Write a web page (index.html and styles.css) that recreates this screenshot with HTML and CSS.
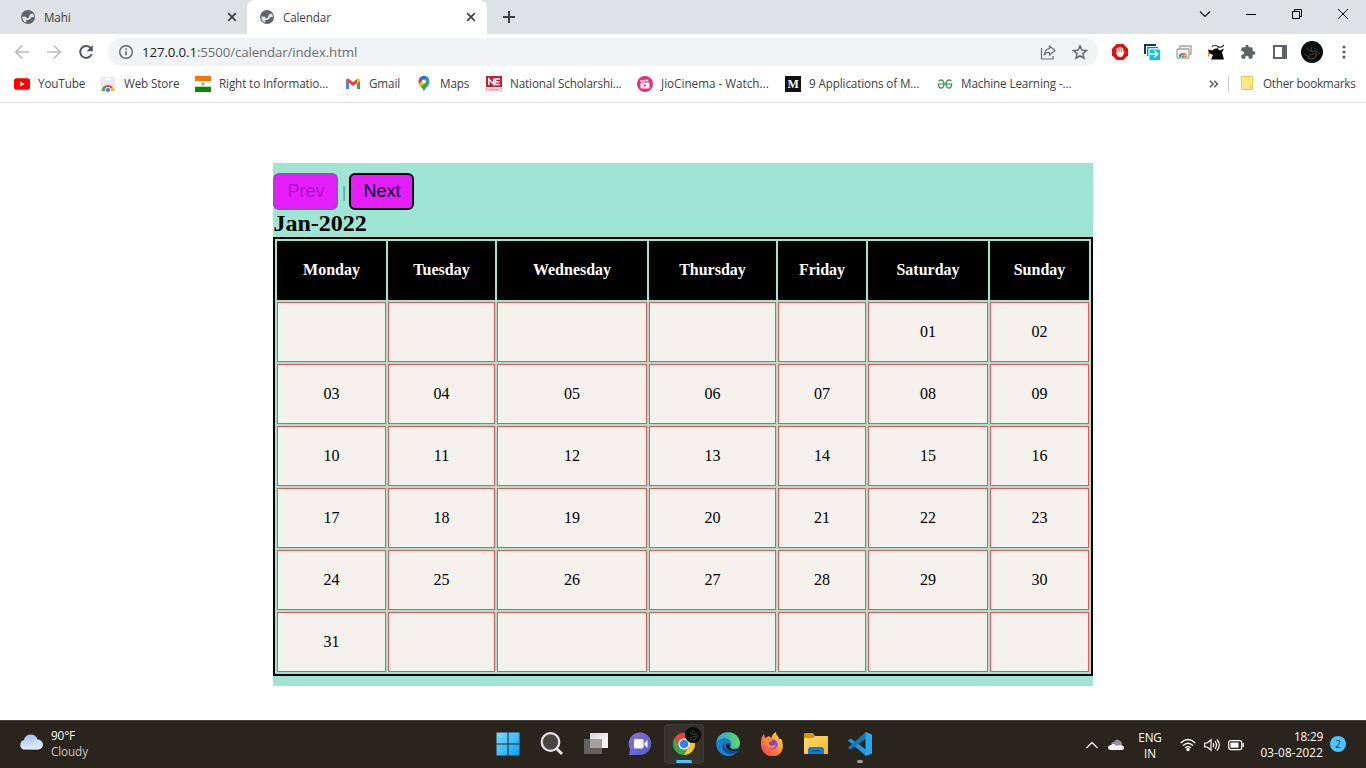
FILE: index.html
```html
<!DOCTYPE html>
<html lang="en">
<head>
<meta charset="utf-8">
<title>Calendar</title>
<link rel="stylesheet" href="styles.css">
</head>
<body>
<svg class="defs" width="0" height="0">
  <defs>
    <symbol id="globe" viewBox="0 0 16 16"><circle cx="8" cy="8" r="7" fill="#5f6368"/><path d="M9.300 2.500L7 4.700V6.500h2L10.500 5l2.300-.5Q14 6 14 8L11.500 8.300 10 10.200 8.200 11H6.300v2.600Q3.800 13 2.600 10.500L2.300 7.500l3.400 0 1.500 1.600h1.500L9 7.800 7 6.700l-1.200-.2" fill="#dee1e6"/><path d="M7 4.500h2.500v2.200L8.300 8.500H6.500L5 6.800z" fill="#5f6368"/></symbol>
    <symbol id="cross" viewBox="0 0 10 10"><path d="M1.200 1.200l7.600 7.600M8.800 1.200L1.200 8.800" stroke="#3c4043" stroke-width="1.700"/></symbol>
    <symbol id="portrait" viewBox="0 0 22 22"><circle cx="11" cy="11" r="11" fill="#080b0c"/><path d="M6 7q2 4 9 3l4 3M7 17q2-5 9-4l-2 4q-4 2-7 0" stroke="#5c4a35" stroke-width="1" fill="none"/><path d="M3 13l5 3M11 4l-1 6M13 7l4 2" stroke="#234349" stroke-width="1"/></symbol>
    <linearGradient id="win" x1="0" y1="0" x2="1" y2="1"><stop offset="0" stop-color="#7cdcff"/><stop offset="1" stop-color="#08a2f4"/></linearGradient>
    <linearGradient id="cloudFill" x1="0" y1="0" x2="0" y2="1"><stop offset="0" stop-color="#9fbdf0"/><stop offset="1" stop-color="#e7f0fc"/></linearGradient>
    <linearGradient id="chat" x1="0" y1="0" x2="1" y2="1"><stop offset="0" stop-color="#8a73d1"/><stop offset="1" stop-color="#4d5bcd"/></linearGradient>
    <linearGradient id="edgeTop" x1="0" y1="0" x2="1" y2="0"><stop offset="0" stop-color="#26a5df"/><stop offset="1" stop-color="#67d75b"/></linearGradient>
    <linearGradient id="fox" x1="1" y1="0" x2="0" y2="1"><stop offset="0" stop-color="#fff04a"/><stop offset=".45" stop-color="#ff9128"/><stop offset="1" stop-color="#f52c68"/></linearGradient>
    <linearGradient id="fold" x1="0" y1="0" x2="1" y2="1"><stop offset="0" stop-color="#ffdc72"/><stop offset="1" stop-color="#f6b92b"/></linearGradient>
    <linearGradient id="pane" x1="0" y1="0" x2="1" y2="1"><stop offset="0" stop-color="#d8d8d8"/><stop offset="1" stop-color="#fff"/></linearGradient>
  </defs>
</svg>

<header class="tabs">
  <div class="tab"><svg width="16" height="16"><use href="#globe"/></svg><span>Mahi</span><svg class="tab-close" width="10" height="10"><use href="#cross"/></svg></div>
  <div class="tab active"><svg width="16" height="16"><use href="#globe"/></svg><span>Calendar</span><svg class="tab-close" width="10" height="10"><use href="#cross"/></svg></div>
  <svg class="new-tab" width="12" height="12" viewBox="0 0 12 12"><path d="M6 0v12M0 6h12" stroke="#3c4043" stroke-width="2"/></svg>
  <div class="window-controls">
    <span><svg width="12" height="12" viewBox="0 0 12 12"><path d="M1 3.500l5 5 5-5" fill="none" stroke="#111" stroke-width="1.200"/></svg></span>
    <span><svg width="12" height="12" viewBox="0 0 12 12"><path d="M1 6.500h10" stroke="#000"/></svg></span>
    <span><svg width="12" height="12" viewBox="0 0 12 12"><path d="M1.500 3.500h7v7h-7zM3.500 3.500v-2h7v7h-2" fill="none" stroke="#000"/></svg></span>
    <span><svg width="12" height="12" viewBox="0 0 12 12"><path d="M1 1l10 10M11 1L1 11" stroke="#000"/></svg></span>
  </div>
</header>

<div class="toolbar">
  <span class="slot"><svg width="16" height="16" viewBox="0 0 16 16"><path d="M15 8H2M8.300 1.500L1.800 8l6.500 6.500" fill="none" stroke="#babcbe" stroke-width="1.700"/></svg></span>
  <span class="slot"><svg width="16" height="16" viewBox="0 0 16 16"><path d="M1 8h13M7.700 1.500L14.200 8l-6.500 6.500" fill="none" stroke="#babcbe" stroke-width="1.700"/></svg></span>
  <span class="slot"><svg width="16" height="16" viewBox="0 0 16 16"><path d="M13 4.300A6 6 0 1 0 13.800 10" fill="none" stroke="#54585c" stroke-width="2"/><path d="M14.800 1v6.200H8.600z" fill="#54585c"/></svg></span>
  <div class="address">
    <svg width="16" height="16" viewBox="0 0 16 16"><circle cx="8" cy="8" r="6.300" fill="none" stroke="#5f6368" stroke-width="1.400"/><path d="M8 7.200v4M8 4.300v1.500" stroke="#5f6368" stroke-width="1.600"/></svg>
    <span class="url"><b>127.0.0.1</b>:5500/calendar/index.html</span>
    <span class="slot push"><svg width="16" height="16" viewBox="0 0 16 16"><path d="M1.500 4v11h11.500v-3" fill="none" stroke="#6b6f73" stroke-width="1.200"/><path d="M9.500 2l5.500 4.500-5.500 4.500V8.500C7 8.300 5.300 9.200 4.200 11.200 4.500 7.500 6.300 5 9.500 4.600z" fill="none" stroke="#6b6f73" stroke-width="1.200"/></svg></span>
    <span class="slot"><svg width="16" height="16" viewBox="0 0 16 16"><path d="M8 1.800l1.800 4.300 4.700.4-3.600 3.100 1.100 4.600L8 11.800l-4 2.400 1.100-4.600L1.500 6.500l4.700-.4z" fill="none" stroke="#5f6368" stroke-width="1.400"/></svg></span>
  </div>
  <span class="slot"><svg width="16" height="16" viewBox="0 0 16 16"><path d="M4.700 0h6.600L16 4.700v6.600L11.300 16H4.700L0 11.300V4.700z" fill="#e20e0f"/><path d="M5.200 9V4.700M7 8V3.300M8.800 8V3.300M10.600 8.500V4.500" stroke="#fff" stroke-width="1.200" stroke-linecap="round"/><path d="M4.600 8h6.600l1.600-1.200-1.800 4.700q-.7 1.700-2.700 1.700c-2.400 0-3.700-1.500-3.700-3.600z" fill="#fff"/></svg></span>
  <span class="slot"><svg width="16" height="16" viewBox="0 0 16 16"><path d="M1 10V1h11" fill="none" stroke="#00396b" stroke-width="2"/><path d="M3.700 12V3.700H14" fill="none" stroke="#137db5" stroke-width="1.300"/><path d="M5.500 5.500H16V16H5.500z" fill="#00cbe6"/><path d="M5.500 10H13M10.300 6.800l3.200 3.200-3.200 3.200" fill="none" stroke="#fff" stroke-width="1.600"/></svg></span>
  <span class="slot"><svg width="16" height="16" viewBox="0 0 16 16"><path d="M4 5V2h11v8h-3" fill="#eee" stroke="#a5a5a5" stroke-width="1.300"/><rect x="1" y="5" width="12" height="9" rx="1" fill="#f5f5f5" stroke="#a5a5a5" stroke-width="1.300"/><path d="M3 13a4 4 0 0 1 8 0z" fill="#ea4335"/><path d="M3 13q0-2 1.500-3.200L7 13z" fill="#35a852"/><path d="M11 13q0-1.500-.7-2.500H7z" fill="#fbc116"/><circle cx="7" cy="12.500" r="1.700" fill="#4285f4" stroke="#fff" stroke-width=".5"/></svg></span>
  <span class="slot"><svg width="16" height="16" viewBox="0 0 16 16"><path d="M0 5.500l4 1Q8 2.500 12 6.500l4-2-2 4 2 7H3L5 11 1 9z" fill="#050505"/><path d="M4 2.500q3-2 6 0t6-1.500M11 2.500L9 5" fill="none" stroke="#333" stroke-width="1.200"/><path d="M0 7l2 3.500-2 3z" fill="#f58b20"/></svg></span>
  <span class="slot"><svg width="16" height="16" viewBox="0 0 24 24"><path d="M20.500 11H19V7a2 2 0 0 0-2-2h-4V3.500a2.500 2.500 0 0 0-5 0V5H4a2 2 0 0 0-2 2v3.800h1.500a2.700 2.700 0 0 1 0 5.400H2V20c0 1.100.9 2 2 2h3.800v-1.500a2.700 2.700 0 0 1 5.400 0V22H17a2 2 0 0 0 2-2v-4h1.500a2.500 2.500 0 0 0 0-5z" fill="#5f6368"/></svg></span>
  <span class="slot"><svg width="16" height="16" viewBox="0 0 16 16"><path d="M1 1h14v14H1zM3 3v10h7V3z" fill="#5f6368" fill-rule="evenodd"/></svg></span>
  <span class="slot"><svg width="22" height="22"><use href="#portrait"/></svg></span>
  <span class="slot"><svg width="16" height="16" viewBox="0 0 16 16" fill="#5f6368"><circle cx="8" cy="3" r="1.600"/><circle cx="8" cy="8" r="1.600"/><circle cx="8" cy="13" r="1.600"/></svg></span>
</div>

<nav class="bookmarks">
  <a class="w86"><svg width="16" height="16" viewBox="0 0 16 16"><rect y="2.300" width="16" height="11.500" rx="2.500" fill="#f00"/><path d="M6.300 5.500v5L10.700 8z" fill="#fff"/></svg>YouTube</a>
  <a class="w95"><svg width="16" height="16" viewBox="0 0 16 16"><path d="M1 1h14v14H1z" fill="#e9e9e9"/><path d="M5 3h6" stroke="#fff" stroke-width="2"/><path d="M2 15a6 6 0 0 1 12 0z" fill="#e94335"/><path d="M2 15q0-3 2-5l4 5z" fill="#34a853"/><path d="M14 15q0-3-1.500-4L8 15z" fill="#fbbc05"/><circle cx="8" cy="14" r="2.700" fill="#4285f4" stroke="#fff"/></svg>Web Store</a>
  <a class="w150"><svg width="16" height="16" viewBox="0 0 16 16"><path d="M0 0h16v5.300H0z" fill="#ff7300"/><path d="M0 5.300h16v5.400H0z" fill="#fff"/><path d="M0 10.700h16V16H0z" fill="#078807"/><circle cx="8" cy="8" r="1.800" fill="#a9abd8"/></svg>Right to Informatio...</a>
  <a class="w71"><svg width="16" height="16" viewBox="0 0 16 16"><path d="M1 4v9h3V7z" fill="#4285f4"/><path d="M12 7v6h3V4z" fill="#34a853"/><path d="M1 4.500V4q1-2.500 3-1l4 3.200L12 3l.3 4L8 10 4 7z" fill="#ea4335"/><path d="M12 3q2-1.500 3 1v1.500L12 7.500z" fill="#fbbc04"/></svg>Gmail</a>
  <a class="w70"><svg width="16" height="16" viewBox="0 0 16 16"><path d="M8 0a5.500 5.500 0 0 0-5.500 5.500C2.500 10 7 11 8 16c1-5 5.500-6 5.500-10.500A5.500 5.500 0 0 0 8 0z" fill="#34a853"/><path d="M8 0a5.500 5.500 0 0 1 5 3.500L8 8z" fill="#4285f4"/><path d="M3.800 2A5.500 5.500 0 0 1 8 0l3 .9L6 7z" fill="#1a73e8"/><path d="M3.800 2l3 2.500L3 8Q1.700 4.500 3.800 2z" fill="#ea4335"/><path d="M3 8l4-4 1.500 3.500-4 3.500z" fill="#fbbc04"/><circle cx="8" cy="5.500" r="2" fill="#fff"/></svg>Maps</a>
  <a class="w151"><svg width="16" height="16" viewBox="0 0 16 16"><path d="M0 0h16v11H0z" fill="#c51e35"/><path d="M2.800 9V3l5 5.500V2.500M14 3H9.500v5.500H14M9.500 5.800h4" fill="none" stroke="#fff" stroke-width="1.500"/><path d="M.5 12h15v3H.5z" fill="#eee" stroke="#d88b96" stroke-width=".6"/><path d="M3 13.500h10" stroke="#dba0a8"/></svg>National Scholarshi...</a>
  <a class="w148 roomy"><svg width="16" height="16" viewBox="0 0 16 16"><circle cx="8" cy="8" r="8" fill="#e82f79"/><rect x="3.500" y="6.500" width="9" height="6" rx="1" fill="#fff"/><path d="M3.500 5l8.500-.7" stroke="#fff" stroke-width="1.800" stroke-dasharray="2 .7"/><path d="M7 8v3l2.500-1.500z" fill="#e82f79"/></svg>JioCinema - Watch...</a>
  <a class="w152"><svg width="16" height="16" viewBox="0 0 16 16"><path d="M0 0h16v16H0z" fill="#111"/><text class="medium-mark" x="8" y="12" text-anchor="middle">M</text></svg>9 Applications of M...</a>
  <a><svg width="16" height="16" viewBox="0 0 16 16"><path d="M1.500 5.200Q2.500 3.800 4 3.800 7 4.200 7 8T4 12.200Q1.500 12 1.500 8M14.500 5.200Q13.500 3.800 12 3.800 9 4.200 9 8T12 12.200Q14.500 12 14.500 8M.5 8h15" fill="none" stroke="#2f8d46" stroke-width="1.200"/></svg>Machine Learning -...</a>
  <svg class="more" width="10" height="8" viewBox="0 0 10 8"><path d="M1 .8L4.200 4 1 7.200M5.200.8L8.400 4 5.200 7.200" fill="none" stroke="#55595d" stroke-width="1.500"/></svg>
  <a class="other"><svg width="12" height="15" viewBox="0 0 12 15"><path d="M.5.500h11v13H.5z" fill="#ffe58c" stroke="#ebc944"/><path d="M11.500 10q-3-1-2.500 3.500h2.500z" fill="#ffe58c" stroke="#ebc944"/></svg>Other bookmarks</a>
</nav>

<main class="page">
  <section class="calendar">
    <div class="controls"><button class="btn" disabled>Prev</button><span class="bar"></span><button class="btn">Next</button></div>
    <h2 class="month">Jan-2022</h2>
    <table class="grid">
      <colgroup><col class="mon"><col class="tue"><col class="wed"><col class="thu"><col class="fri"><col class="sat"><col class="sun"></colgroup>
      <thead><tr><th>Monday</th><th>Tuesday</th><th>Wednesday</th><th>Thursday</th><th>Friday</th><th>Saturday</th><th>Sunday</th></tr></thead>
      <tbody>
        <tr><td></td><td></td><td></td><td></td><td></td><td>01</td><td>02</td></tr>
        <tr><td>03</td><td>04</td><td>05</td><td>06</td><td>07</td><td>08</td><td>09</td></tr>
        <tr><td>10</td><td>11</td><td>12</td><td>13</td><td>14</td><td>15</td><td>16</td></tr>
        <tr><td>17</td><td>18</td><td>19</td><td>20</td><td>21</td><td>22</td><td>23</td></tr>
        <tr><td>24</td><td>25</td><td>26</td><td>27</td><td>28</td><td>29</td><td>30</td></tr>
        <tr><td>31</td><td></td><td></td><td></td><td></td><td></td><td></td></tr>
      </tbody>
    </table>
  </section>
</main>

<footer class="taskbar">
  <div class="weather">
    <svg width="24" height="16" viewBox="0 0 24 16"><path d="M4.500 15.500a5 5 0 0 1 .5-9.500A7 7 0 0 1 18.500 5.500a5 5 0 0 1 .9 10z" fill="url(#cloudFill)"/><path d="M14 8.500q2-4 5.500-2.500A5 5 0 0 1 19 15.500H8q7-1 6-7z" fill="#dce8fa" opacity=".5"/></svg>
    <div><div>90°F</div><div class="dim">Cloudy</div></div>
  </div>
  <div class="apps">
    <span><svg width="24" height="24" viewBox="0 0 24 24"><path d="M.5.500h11v11h-11zM12.500.500h11v11h-11zM.5 12.500h11v11h-11zM12.500 12.500h11v11h-11z" fill="url(#win)"/></svg></span>
    <span><svg width="24" height="24" viewBox="0 0 24 24"><circle cx="10.500" cy="10" r="8.800" fill="#4a4540" stroke="#e3e3e5" stroke-width="2.300"/><path d="M16.500 16.500l5.500 5.500" stroke="#e3e3e5" stroke-width="3"/></svg></span>
    <span><svg width="24" height="24" viewBox="0 0 24 24"><path d="M6 1h18v15H6z" fill="url(#pane)"/><path d="M0 7h18v15H0z" fill="#676665" opacity=".95"/><path d="M6 7h12v9H6z" fill="#a0a0a0"/></svg></span>
    <span><svg width="24" height="24" viewBox="0 0 24 24"><path d="M1 23l1-6A11.300 11.300 0 1 1 12 23z" fill="url(#chat)"/><rect x="6" y="7" width="9.500" height="9.500" rx="1.500" fill="#fff"/><path d="M16.500 11l3-3v8l-3-3z" fill="#fff"/></svg></span>
    <span class="running">
      <svg width="24" height="24" viewBox="0 0 24 24"><circle cx="12" cy="12" r="11" fill="#34a853"/><path d="M2.500 6.500A11 11 0 0 1 21.500 6.500H12L7.200 14.700z" fill="#ea4335"/><path d="M21.500 6.500A11 11 0 0 1 12 23l4.800-8.300L12 6.500z" fill="#fbc42d"/><circle cx="12" cy="12" r="5.500" fill="#fff"/><circle cx="12" cy="12" r="4.300" fill="#377fe8"/></svg>
      <svg class="profile-badge" width="16" height="16"><use href="#portrait"/></svg>
    </span>
    <span><svg width="24" height="24" viewBox="0 0 24 24"><circle cx="12" cy="12" r="11.800" fill="#137cc4"/><path d="M.5 10C2-3 23-3 24 11c0 6-8 7-10 4 4-5-2-10-7-8.500C3 7.500 1 9 .5 10z" fill="url(#edgeTop)"/><path d="M9 10c-5 5 2 16 12 10C15 28 1 23 1 13.500 1 9 8 7 9 10z" fill="#1683d5"/><path d="M9 10c-3 5 4 12 13 8q2 0 .5 1.500C14 26 4 20 7 12z" fill="#0d4d98"/><path d="M14 15c1 3 6 3 9 1.300L22 19q-10 1-12-4-.7-3 2-4 3 1 2 4z" fill="#29231b"/></svg></span>
    <span><svg width="24" height="24" viewBox="0 0 24 24"><path d="M1 10Q1 5 4 2l1 4 4-2q2 1 2 3 1-5 5-7c0 4 3 4 3 7q3-1 3.500 4C26 28 2 29 1 13z" fill="url(#fox)"/><circle cx="12.500" cy="12.500" r="5" fill="#873ce1"/><path d="M4 7q6-1 9 2-5 0-4 3 2 3 7 0-1 6-6 4-4-1-5-5z" fill="#ff8a2f"/></svg></span>
    <span><svg width="24" height="24" viewBox="0 0 24 24"><path d="M0 2q0-1 1-1h8l2 3-2 4H0z" fill="#d6930c"/><path d="M0 6h9l2-2h13v18H0z" fill="url(#fold)"/><path d="M4 22v-4q0-3 3-3h10q3 0 3 3v4z" fill="#147bcc"/><path d="M8 19h8" stroke="#085ca5" stroke-width="1.500"/></svg></span>
    <span class="open"><svg width="24" height="24" viewBox="0 0 24 24"><path d="M0 8.500l2.500-2L18 17.500V24z" fill="#2296de"/><path d="M0 15.500L18 0v6.700L2.500 17.500z" fill="#0f78bd"/><path d="M17.500 0L24 2.500v19L17.500 24z" fill="#2ca7ee"/></svg></span>
  </div>
  <div class="tray">
    <svg width="14" height="8" viewBox="0 0 14 8"><path d="M1.500 7L7 1.500 12.500 7" fill="none" stroke="#eee" stroke-width="1.300"/></svg>
    <svg class="tray-cloud" width="16" height="12" viewBox="0 0 16 12"><path d="M3 7Q3 3 6 3q2-4 5.500-1.500Q14 2 14 6z" fill="#929190"/><path d="M3 11Q0 11 0 8.500T3.500 6Q5 4 8 6.500L12 6q4 0 4 2.700T13 11z" fill="#f2f2f2"/></svg>
    <div class="lang">ENG<br>IN</div>
    <div class="status">
      <svg width="16" height="14" viewBox="0 0 16 14" fill="none" stroke="#fff" stroke-width="1.300"><path d="M.7 5Q8-2 15.300 5M3 7.500q5-4.600 10 0M5.200 9.800q2.800-2.400 5.600 0"/><circle cx="8" cy="11.500" r="1" fill="#fff"/></svg>
      <svg width="16" height="14" viewBox="0 0 16 14" fill="none" stroke="#fff" stroke-width="1.200"><path d="M.7 5h2.500L7 1.700v10.600L3.200 9H.7zM9 5q1.500 2 0 4M11 3q3 4 0 8M13 1.500q4.500 5.500 0 11"/></svg>
      <svg width="16" height="14" viewBox="0 0 16 14"><rect x=".7" y="2.600" width="13" height="9" rx="2" fill="none" stroke="#fff" stroke-width="1.200"/><rect x="2.500" y="4.500" width="8" height="5.200" fill="#fff"/><path d="M15.200 5v4" stroke="#fff" stroke-width="1.400"/></svg>
    </div>
    <div class="clock"><span class="time">18:29</span><span class="date">03-08-2022</span></div>
    <span class="count">2</span>
  </div>
</footer>
</body>
</html>
```
FILE: styles.css
```css
* { box-sizing: border-box; }
body {
  margin: 0;
  width: 1366px;
  height: 768px;
  overflow: hidden;
  display: flex;
  flex-direction: column;
  background: #fff;
  font: 12px/16px "Open Sans", "Noto Sans", sans-serif;
  color: #3c4043;
}
svg { display: block; flex: none; }
.defs { position: absolute; }

/* Tab strip */
.tabs { display: flex; height: 34px; background: #dee1e6; flex: none; }
.tab {
  display: flex;
  align-items: center;
  width: 240px;
  padding: 0 11px 0 12px;
  gap: 8px;
  font-size: 11.7px;
  letter-spacing: -.15px;
}
.tab:first-child { width: 247px; padding: 0 10px 0 20px; }
.tab-close { margin-left: auto; }
.tab.active { background: #fff; border-radius: 8px 8px 0 0; }
.new-tab { margin: 11px 0 0 16px; }
.window-controls { display: flex; margin-left: auto; height: 28px; }
.window-controls span { width: 46px; display: grid; place-items: center; }

/* Navigation toolbar */
.toolbar { display: flex; align-items: center; height: 36px; padding: 0 6px; flex: none; }
.slot { width: 32px; display: grid; place-items: center; flex: none; }
.address {
  display: flex;
  align-items: center;
  width: 990px;
  height: 28px;
  margin: 0 6px;
  padding: 0 2px 0 10px;
  border-radius: 14px;
  background: #f1f3f4;
}
.url { margin-left: 8px; font-size: 13.3px; letter-spacing: -.13px; color: #6b6f73; }
.url b { font-weight: 400; color: #202124; }
.push { margin-left: auto; }

/* Bookmarks */
.bookmarks {
  display: flex;
  align-items: center;
  height: 33px;
  padding: 0 10px 5px 14px;
  border-bottom: 1px solid #dadce0;
  font-size: 11.7px;
  line-height: 15px;
  letter-spacing: -.13px;
  flex: none;
}
.bookmarks a { display: flex; align-items: center; gap: 8px; white-space: nowrap; }
.bookmarks .roomy { letter-spacing: 0; }
.w86 { width: 86px; } .w95 { width: 95px; } .w150 { width: 150px; }
.w71 { width: 71px; } .w70 { width: 70px; } .w151 { width: 151px; }
.w148 { width: 148px; } .w152 { width: 152px; }
.medium-mark { font: bold 12px "Liberation Serif", serif; fill: #fff; }
.more { margin-left: auto; margin-right: 9px; }
.bookmarks .other { width: 128px; height: 16px; gap: 10px; border-left: 1px solid #c9ccd0; padding-left: 12px; letter-spacing: -.23px; }

/* Calendar */
.page { flex: 1; padding-top: 60px; font-family: "Liberation Serif", serif; color: #000; }
.calendar { width: 820px; height: 523px; margin: 0 auto; padding-top: 10px; background: #9fe5d3; }
.controls { display: flex; height: 37px; }
.btn {
  width: 65px;
  height: 37px;
  padding: 0 0 1px 1px;
  border: 2px solid #000;
  border-radius: 6px;
  background: #e61eff;
  color: #000;
  font: 18px "Liberation Sans", sans-serif;
}
.btn:disabled { border-color: #b13cc6; color: #aa17bc; }
.bar { width: 2px; height: 15px; margin: 13px 4px 0 5px; background: linear-gradient(90deg, #a2ab86 50%, #6aa9ac 50%); }
.month { margin: 0; height: 27px; padding-left: .5px; font-size: 24px; line-height: 27px; font-weight: 700; }
.grid {
  width: 820px;
  height: 439px;
  table-layout: fixed;
  border: 2px solid #000;
  border-spacing: 2px;
  font-size: 16px;
  text-align: center;
}
.mon { width: 109px; } .tue { width: 107px; } .wed { width: 150px; } .thu { width: 127px; }
.fri { width: 88px; } .sat { width: 120px; } .sun { width: 99px; }
.grid th { height: 59px; padding: 0 0 2px; background: #000; color: #fff; }
.grid td { height: 60px; padding: 0; background: #f5f1ec; border: 1px solid #ef5350; }

/* Taskbar */
.taskbar {
  display: flex;
  height: 48px;
  flex: none;
  background: #29241c;
  border-top: 1px solid #444139;
  color: #fff;
}
.weather { display: flex; flex: none; width: 488px; padding: 6px 0 0 19px; gap: 8px; font-size: 11.7px; letter-spacing: -.1px; }
.weather svg { margin-top: 7px; }
.dim { color: #c8c6c3; }
.apps { display: flex; gap: 4px; padding: 3px 0; }
.apps > span { position: relative; width: 40px; height: 40px; display: grid; place-items: center; }
.apps .running { background: #37322b; border-radius: 4px; box-shadow: inset 0 0 0 1px #403b34; }
.profile-badge { position: absolute; right: 3px; top: 3px; }
.running::after, .open::after {
  content: "";
  position: absolute;
  bottom: 1px;
  left: 12px;
  width: 16px;
  height: 3px;
  border-radius: 2px;
  background: #4cc2ff;
}
.open::after { left: 17px; width: 6px; background: #a09d99; }
.tray { display: flex; align-items: center; margin-left: auto; padding-right: 20px; font-size: 11.7px; letter-spacing: -.15px; }
.tray-cloud { margin-left: 9px; }
.lang { width: 28px; margin: 0 16px 0 12px; text-align: center; }
.status { display: flex; gap: 8px; }
.clock { width: 79px; display: flex; flex-direction: column; text-align: right; margin-bottom: 2px; }
.date { letter-spacing: .15px; }
.count {
  width: 16px;
  height: 16px;
  margin: 0 0 2px 7px;
  border-radius: 8px;
  background: #4cc2ff;
  color: #14394c;
  font-size: 10px;
  text-align: center;
}
```
